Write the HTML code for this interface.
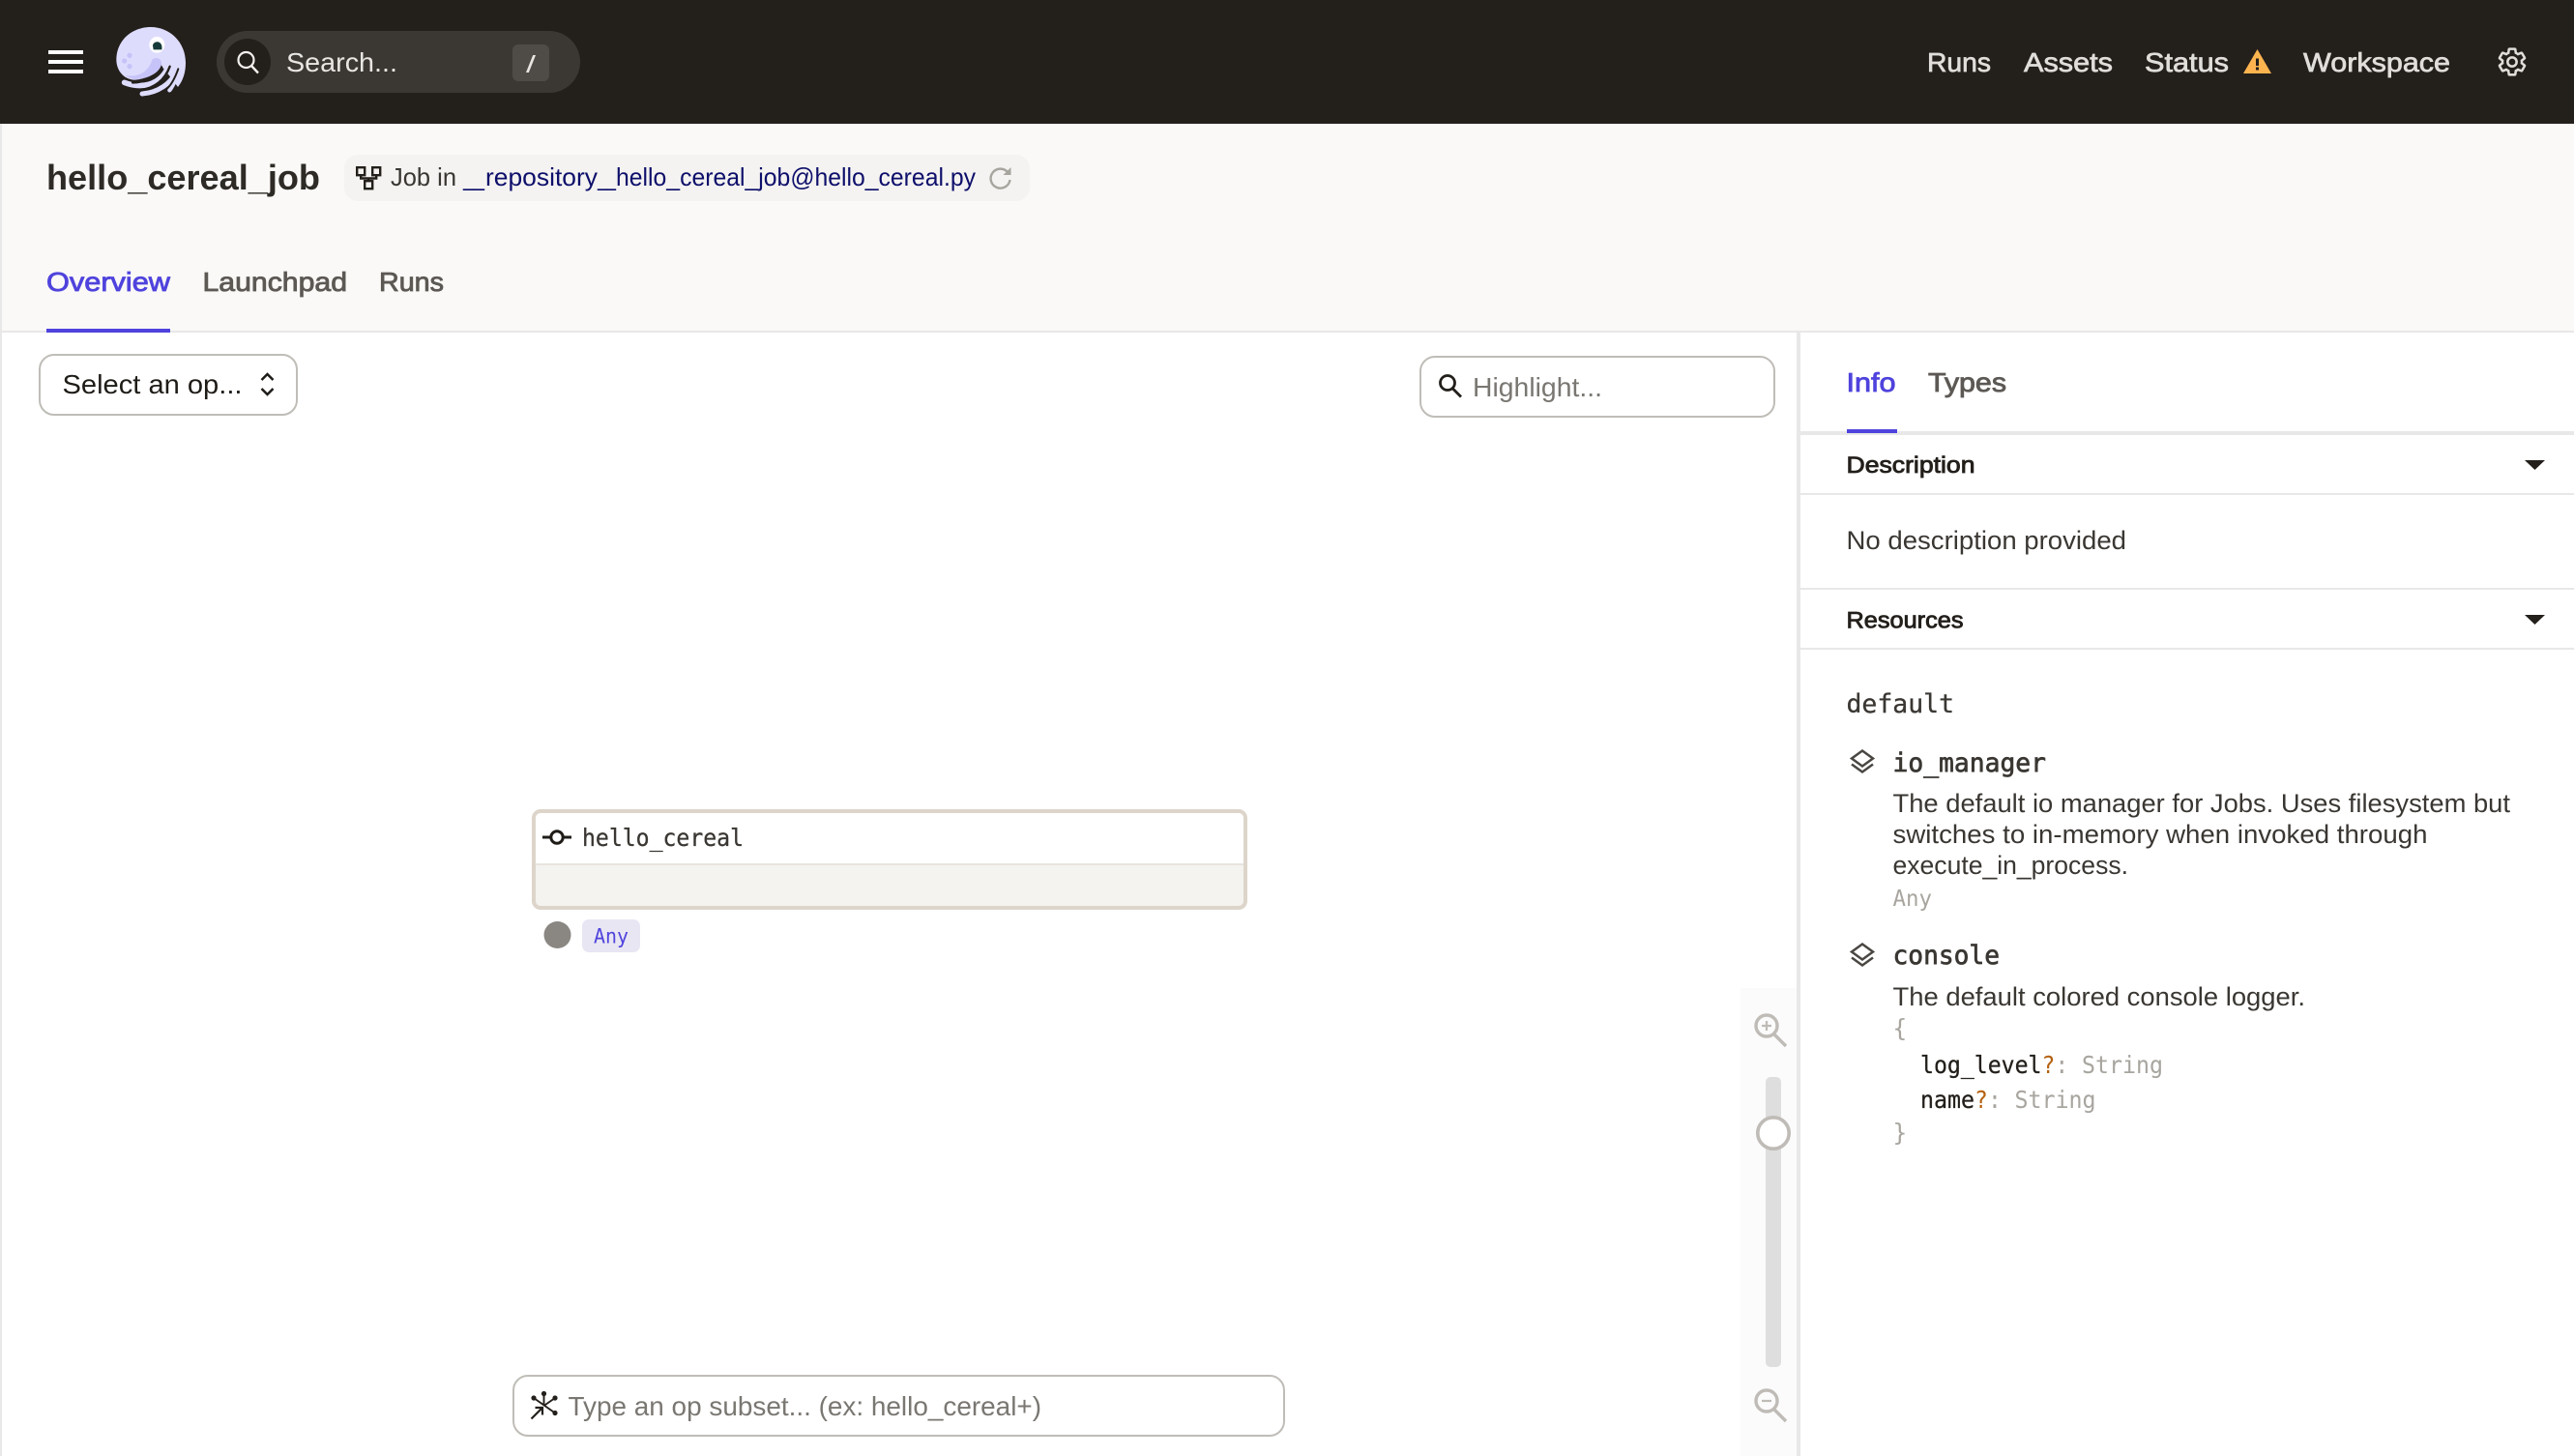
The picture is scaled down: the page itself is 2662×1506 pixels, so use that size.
<!DOCTYPE html>
<html lang="en">
<head>
<meta charset="utf-8">
<title>hello_cereal_job</title>
<style>
html,body{margin:0;padding:0;width:2662px;height:1506px;overflow:hidden;background:#fff}
svg{display:block}
text{font-family:"Liberation Sans",sans-serif;white-space:pre}
.m{font-family:"DejaVu Sans Mono",monospace}
.med{stroke:currentColor;stroke-width:.7}
.sb{stroke:currentColor;stroke-width:.85}
.mr{stroke:currentColor;stroke-width:.3}
</style>
</head>
<body>
<svg xmlns="http://www.w3.org/2000/svg" width="2662" height="1506" viewBox="0 0 2662 1506">
  <!-- backgrounds -->
  <rect width="2662" height="1506" fill="#fff"/>
  <rect x="0" y="128" width="2662" height="214" fill="#FAF9F7"/>
  <rect x="0" y="342" width="2662" height="2" fill="#E8E8E8"/>
  <rect x="0" y="128" width="2" height="1378" fill="#E8E8E8"/>

  <!-- top bar -->
  <rect width="2662" height="128" fill="#231F1B"/>
  <rect x="50" y="52" width="36" height="4" fill="#fff"/>
  <rect x="50" y="62" width="36" height="4" fill="#fff"/>
  <rect x="50" y="72" width="36" height="4" fill="#fff"/>

  <!-- logo -->
  <g transform="translate(30,10) scale(.33333)">
    <path d="M271 155C271 95 320 54 378 54C436 54 486 100 486 165C486 195 478 220 462 240L405 165C400 200 360 215 330 218C295 218 271 190 271 155Z" fill="#DEDCFD"/>
    <path d="M296 226C345 245 405 238 432 178" fill="none" stroke="#DEDCFD" stroke-width="17" stroke-linecap="round"/>
    <path d="M351 261C395 258 445 232 461 180" fill="none" stroke="#DEDCFD" stroke-width="15" stroke-linecap="round"/>
    <path d="M436 250C450 232 460 205 470 170" fill="none" stroke="#DEDCFD" stroke-width="13" stroke-linecap="round"/>
    <path d="M415 180C430 200 445 190 455 178L480 170L470 140L420 140Z" fill="#DEDCFD"/>
    <path d="M404 170C392 210 355 226 322 226" fill="none" stroke="#231F1B" stroke-width="8" stroke-linecap="round"/>
    <path d="M437 176C420 222 385 244 345 250" fill="none" stroke="#231F1B" stroke-width="7" stroke-linecap="round"/>
    <path d="M463 184C452 215 440 236 425 248" fill="none" stroke="#231F1B" stroke-width="6" stroke-linecap="round"/>
    <path d="M382 155C392 146 413 148 411 170C404 198 365 216 330 216C312 214 304 208 300 204C342 212 372 190 382 155Z" fill="#C6C3F8"/>
    <circle cx="312" cy="142" r="8" fill="#C6C3F8"/>
    <circle cx="296" cy="159" r="8" fill="#C6C3F8"/>
    <circle cx="312" cy="176" r="8" fill="#C6C3F8"/>
    <ellipse cx="397" cy="109" rx="24" ry="25" fill="#fff"/>
    <path d="M384 112C384 104 392 99 401 100C410 102 414 112 412 124L386 124Z" fill="#163A3A"/>
  </g>

  <!-- search pill -->
  <rect x="224" y="32" width="376" height="64" rx="32" fill="#3B3834"/>
  <circle cx="256" cy="64" r="24" fill="#231F1B"/>
  <circle cx="254.5" cy="62" r="8" fill="none" stroke="#F2F1EF" stroke-width="2.2"/>
  <path d="M260 68L267 75.5" stroke="#F2F1EF" stroke-width="2.4" fill="none"/>
  <text x="296" y="74" font-size="28" fill="#E8E6E3" textLength="115" lengthAdjust="spacingAndGlyphs">Search...</text>
  <rect x="530" y="46" width="38" height="38" rx="6" fill="#4F4C48"/>
  <text x="544" y="75" font-size="25" fill="#E8E6E3" textLength="10" lengthAdjust="spacingAndGlyphs">/</text>

  <!-- nav -->
  <g font-size="28" fill="#E0DEDB" color="#E0DEDB">
    <text class="med" x="1993" y="74" textLength="66" lengthAdjust="spacingAndGlyphs">Runs</text>
    <text class="med" x="2093" y="74" textLength="92" lengthAdjust="spacingAndGlyphs">Assets</text>
    <text class="med" x="2218" y="74" textLength="87" lengthAdjust="spacingAndGlyphs">Status</text>
    <text class="med" x="2382" y="74" textLength="152" lengthAdjust="spacingAndGlyphs">Workspace</text>
  </g>
  <path d="M2334.5 51L2349 76H2320Z" fill="#FDB44F"/>
  <rect x="2333" y="60.5" width="3" height="7.5" fill="#231F1B"/>
  <rect x="2333" y="69.5" width="3" height="3" fill="#231F1B"/>
  <g transform="translate(2582,48) scale(1.333)">
    <path fill="none" stroke="#E0DEDB" stroke-width="1.9" d="M19.43 12.98c.04-.32.07-.64.07-.98s-.03-.66-.07-.98l2.11-1.65c.19-.15.24-.42.12-.64l-2-3.46c-.12-.22-.39-.3-.61-.22l-2.49 1c-.52-.4-1.08-.73-1.69-.98l-.38-2.65C14.46 2.18 14.25 2 14 2h-4c-.25 0-.46.18-.49.42l-.38 2.65c-.61.25-1.17.59-1.69.98l-2.49-1c-.23-.09-.49 0-.61.22l-2 3.46c-.13.22-.07.49.12.64l2.11 1.65c-.04.32-.07.65-.07.98s.03.66.07.98l-2.11 1.65c-.19.15-.24.42-.12.64l2 3.46c.12.22.39.3.61.22l2.49-1c.52.4 1.08.73 1.69.98l.38 2.65c.03.24.24.42.49.42h4c.25 0 .46-.18.49-.42l.38-2.65c.61-.25 1.17-.59 1.69-.98l2.49 1c.23.09.49 0 .61-.22l2-3.46c.12-.22.07-.49-.12-.64l-2.11-1.65zM12 15.5c-1.93 0-3.5-1.57-3.5-3.5s1.57-3.5 3.5-3.5 3.5 1.57 3.5 3.5-1.57 3.5-3.5 3.5z"/>
  </g>

  <!-- page header -->
  <text x="48" y="196" font-size="36" font-weight="700" fill="#2E2B27" textLength="283" lengthAdjust="spacingAndGlyphs">hello_cereal_job</text>
  <rect x="356" y="160" width="709" height="48" rx="14" fill="#F4F3F1"/>
  <g fill="none" stroke="#231F1B" stroke-width="2.4">
    <rect x="369.2" y="173.2" width="8" height="8"/>
    <rect x="385.2" y="173.2" width="8" height="8"/>
    <rect x="377.2" y="187.2" width="8" height="8"/>
    <path d="M373.2 181.5V184.5H389.2V181.5M381.2 184.5V187"/>
  </g>
  <text x="404" y="192" font-size="26" fill="#3A3733" textLength="68" lengthAdjust="spacingAndGlyphs">Job in</text>
  <g font-size="26" fill="#0E0F6B">
    <text x="479" y="192" textLength="22" lengthAdjust="spacingAndGlyphs">__</text>
    <text x="502" y="192" textLength="116" lengthAdjust="spacingAndGlyphs">repository</text>
    <text x="618" y="192" textLength="19" lengthAdjust="spacingAndGlyphs">__</text>
    <text x="637" y="192" textLength="372" lengthAdjust="spacingAndGlyphs">hello_cereal_job@hello_cereal.py</text>
  </g>
  <path d="M1042.5 178.5A10 10 0 1 0 1044.5 186" fill="none" stroke="#A8A59F" stroke-width="2.4"/>
  <path d="M1045.5 173V181H1037.5Z" fill="#A8A59F"/>

  <!-- tabs -->
  <text class="sb" x="48" y="301" font-size="28" fill="#4F43DD" color="#4F43DD" textLength="128" lengthAdjust="spacingAndGlyphs">Overview</text>
  <text class="sb" x="209.5" y="301" font-size="28" fill="#5C5955" color="#5C5955" textLength="149.5" lengthAdjust="spacingAndGlyphs">Launchpad</text>
  <text class="sb" x="392" y="301" font-size="28" fill="#5C5955" color="#5C5955" textLength="67" lengthAdjust="spacingAndGlyphs">Runs</text>
  <rect x="48" y="340" width="128" height="4" fill="#4F43DD"/>

  <!-- select -->
  <rect x="41" y="367" width="266" height="62" rx="15" fill="#fff" stroke="#C0BDB8" stroke-width="2"/>
  <text x="64.5" y="407" font-size="28" fill="#1F1C18" textLength="186" lengthAdjust="spacingAndGlyphs">Select an op...</text>
  <path d="M270.5 393L276.5 387L282.5 393M270.5 402L276.5 408L282.5 402" fill="none" stroke="#1F1C18" stroke-width="2.5"/>

  <!-- highlight -->
  <rect x="1469" y="369" width="366" height="62" rx="15" fill="#fff" stroke="#C0BDB8" stroke-width="2"/>
  <circle cx="1497" cy="396" r="7.5" fill="none" stroke="#231F1B" stroke-width="2.8"/>
  <path d="M1502.5 402L1511 410.5" stroke="#231F1B" stroke-width="2.8" fill="none"/>
  <text x="1523" y="410" font-size="28" fill="#7A7772" textLength="134" lengthAdjust="spacingAndGlyphs">Highlight...</text>

  <!-- graph node -->
  <rect x="552" y="839" width="736" height="100" rx="7" fill="#F4F3F0" stroke="#DDD5CA" stroke-width="4"/>
  <path d="M554 893V846a5 5 0 0 1 5-5H1281a5 5 0 0 1 5 5V893Z" fill="#fff"/>
  <rect x="554" y="893" width="732" height="2" fill="#E8E4DE"/>
  <path d="M561 866H591" stroke="#1F1C18" stroke-width="3"/>
  <circle cx="576" cy="866" r="6.2" fill="#fff" stroke="#1F1C18" stroke-width="3"/>
  <text class="m mr" x="602" y="875" font-size="25" fill="#3A3733" color="#3A3733" textLength="167" lengthAdjust="spacingAndGlyphs">hello_cereal</text>
  <circle cx="576.5" cy="967" r="14" fill="#8A8782"/>
  <rect x="602" y="951" width="60" height="34" rx="7" fill="#E8E6F3"/>
  <text class="m" x="614" y="975.5" font-size="21" fill="#4F43DD" textLength="36" lengthAdjust="spacingAndGlyphs">Any</text>

  <!-- zoom control -->
  <rect x="1800" y="1022" width="58" height="484" fill="#FBFBFC"/>
  <g fill="none" stroke="#BFBBB6" stroke-width="3.4">
    <circle cx="1827" cy="1061" r="11"/>
    <path d="M1835 1070L1847 1082"/>
    <path d="M1822 1061H1832M1827 1056V1066" stroke-width="2.2"/>
    <circle cx="1827" cy="1449" r="11"/>
    <path d="M1835 1458L1847 1470"/>
    <path d="M1822 1449H1832" stroke-width="2.2"/>
  </g>
  <rect x="1826" y="1114" width="16" height="300" rx="5" fill="#DEDEDE"/>
  <circle cx="1834" cy="1172" r="16.2" fill="#fff" stroke="#BFBBB6" stroke-width="3.6"/>

  <!-- op subset input -->
  <rect x="531" y="1423" width="797" height="62" rx="15" fill="#fff" stroke="#C0BDB8" stroke-width="2"/>
  <g stroke="#231F1B" stroke-width="1.9" fill="none">
    <path d="M562.5 1441.5V1454M552 1446L574 1461.5M574 1446L562.5 1454"/>
    <path d="M549.5 1467.5L560.5 1456.5M553.5 1456H561V1463.5" stroke-width="2.2"/>
  </g>
  <g fill="#231F1B">
    <circle cx="562.5" cy="1441.5" r="2.6"/>
    <circle cx="552" cy="1446" r="2.6"/>
    <circle cx="574" cy="1446" r="2.6"/>
    <circle cx="574" cy="1461.5" r="2.6"/>
  </g>
  <text x="587.5" y="1464" font-size="28" fill="#7A7772" textLength="489.5" lengthAdjust="spacingAndGlyphs">Type an op subset... (ex: hello_cereal+)</text>

  <!-- right panel -->
  <rect x="1858" y="344" width="4" height="1162" fill="#E8E8E8"/>
  <text class="sb" x="1909.5" y="405" font-size="28" fill="#4F43DD" color="#4F43DD" textLength="51" lengthAdjust="spacingAndGlyphs">Info</text>
  <text class="sb" x="1994" y="405" font-size="28" fill="#5C5955" color="#5C5955" textLength="81" lengthAdjust="spacingAndGlyphs">Types</text>
  <rect x="1862" y="446" width="800" height="4" fill="#E8E8E8"/>
  <rect x="1910" y="444" width="52" height="4" fill="#4F43DD"/>

  <text class="sb" x="1909.5" y="489" font-size="24.5" fill="#231F1B" color="#231F1B" textLength="133" lengthAdjust="spacingAndGlyphs">Description</text>
  <path d="M2611 476H2632L2621.5 486Z" fill="#231F1B"/>
  <rect x="1862" y="510" width="800" height="2" fill="#E8E8E8"/>
  <text x="1909.5" y="568" font-size="26.5" fill="#3A3733" textLength="289.5" lengthAdjust="spacingAndGlyphs">No description provided</text>
  <rect x="1862" y="608" width="800" height="2" fill="#E8E8E8"/>
  <text class="sb" x="1909.5" y="649.5" font-size="24.5" fill="#231F1B" color="#231F1B" textLength="121" lengthAdjust="spacingAndGlyphs">Resources</text>
  <path d="M2611 636H2632L2621.5 646Z" fill="#231F1B"/>
  <rect x="1862" y="670" width="800" height="2" fill="#E8E8E8"/>

  <text class="m mr" x="1909.5" y="737" font-size="27" fill="#3A3733" color="#3A3733" textLength="111.5" lengthAdjust="spacingAndGlyphs">default</text>

  <g fill="none" stroke="#4A4743" stroke-width="2.5">
    <path d="M1926 776.5L1937 784.5L1926 792.5L1915 784.5Z"/>
    <path d="M1915 790.5L1926 798.5L1937 790.5"/>
    <path d="M1926 976.5L1937 984.5L1926 992.5L1915 984.5Z"/>
    <path d="M1915 990.5L1926 998.5L1937 990.5"/>
  </g>
  <text class="m med" x="1957.5" y="798" font-size="27" fill="#3A3733" color="#3A3733" textLength="158.5" lengthAdjust="spacingAndGlyphs">io_manager</text>
  <g font-size="26.5" fill="#3A3733">
    <text x="1957.5" y="840" textLength="638.5" lengthAdjust="spacingAndGlyphs">The default io manager for Jobs. Uses filesystem but</text>
    <text x="1957.5" y="872" textLength="553" lengthAdjust="spacingAndGlyphs">switches to in-memory when invoked through</text>
    <text x="1957.5" y="904" textLength="243.5" lengthAdjust="spacingAndGlyphs">execute_in_process.</text>
  </g>
  <text class="m" x="1957.5" y="937" font-size="23" fill="#A8A59F" textLength="40.5" lengthAdjust="spacingAndGlyphs">Any</text>

  <text class="m med" x="1957.5" y="997" font-size="27" fill="#3A3733" color="#3A3733" textLength="110.5" lengthAdjust="spacingAndGlyphs">console</text>
  <text x="1957.5" y="1040" font-size="26.5" fill="#3A3733" textLength="426.5" lengthAdjust="spacingAndGlyphs">The default colored console logger.</text>

  <g font-size="24.5">
    <text class="m" x="1957.5" y="1072" fill="#A8A59F">{</text>
    <text class="m mr" x="1986" y="1110" fill="#231F1B" color="#231F1B" textLength="125.5" lengthAdjust="spacingAndGlyphs">log_level</text>
    <text class="m" x="2111.5" y="1110" fill="#B5610F" textLength="13.9" lengthAdjust="spacingAndGlyphs">?</text>
    <text class="m" x="2125.4" y="1110" fill="#A8A59F" textLength="13.9" lengthAdjust="spacingAndGlyphs">:</text>
    <text class="m" x="2153" y="1110" fill="#A8A59F" textLength="84" lengthAdjust="spacingAndGlyphs">String</text>
    <text class="m mr" x="1986" y="1146" fill="#231F1B" color="#231F1B" textLength="56" lengthAdjust="spacingAndGlyphs">name</text>
    <text class="m" x="2042" y="1146" fill="#B5610F" textLength="13.9" lengthAdjust="spacingAndGlyphs">?</text>
    <text class="m" x="2056" y="1146" fill="#A8A59F" textLength="13.9" lengthAdjust="spacingAndGlyphs">:</text>
    <text class="m" x="2083.5" y="1146" fill="#A8A59F" textLength="84" lengthAdjust="spacingAndGlyphs">String</text>
    <text class="m" x="1957.5" y="1180" fill="#A8A59F">}</text>
  </g>
</svg>
</body>
</html>
